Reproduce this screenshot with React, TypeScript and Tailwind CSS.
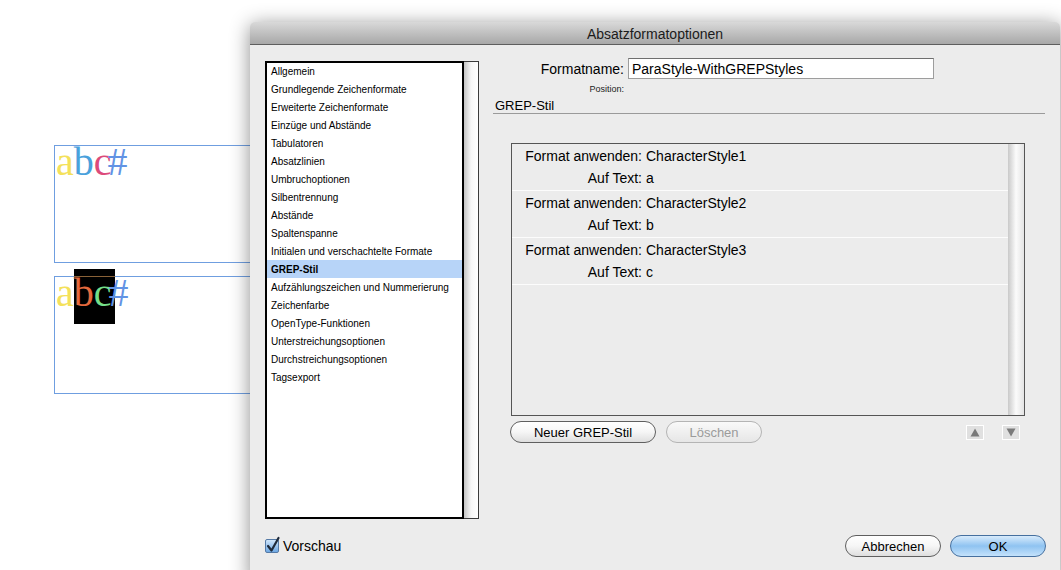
import React from "react";

const sections = [
  "Allgemein",
  "Grundlegende Zeichenformate",
  "Erweiterte Zeichenformate",
  "Einzüge und Abstände",
  "Tabulatoren",
  "Absatzlinien",
  "Umbruchoptionen",
  "Silbentrennung",
  "Abstände",
  "Spaltenspanne",
  "Initialen und verschachtelte Formate",
  "GREP-Stil",
  "Aufzählungszeichen und Nummerierung",
  "Zeichenfarbe",
  "OpenType-Funktionen",
  "Unterstreichungsoptionen",
  "Durchstreichungsoptionen",
  "Tagsexport",
];

const grepRows = [
  { style: "CharacterStyle1", text: "a" },
  { style: "CharacterStyle2", text: "b" },
  { style: "CharacterStyle3", text: "c" },
];

function Triangle({ up }: { up: boolean }) {
  return (
    <svg width="10" height="9" viewBox="0 0 10 9">
      {up ? (
        <polygon points="5,0.5 9.5,8.5 0.5,8.5" fill="#7a7a7a" />
      ) : (
        <polygon points="0.5,0.5 9.5,0.5 5,8.5" fill="#7a7a7a" />
      )}
    </svg>
  );
}

export default function App() {
  return (
    <div className="relative w-[1061px] h-[570px] overflow-hidden bg-white font-['Liberation_Sans',Arial,sans-serif] text-black">
      {/* Canvas text frame 1 */}
      <div className="absolute left-[54px] top-[145px] w-[260px] h-[118px] border border-[#6f9ee0]">
        <div className="-mt-[4px] pl-[1px] font-['Liberation_Serif','Times_New_Roman',serif] text-[40px] leading-[40px] whitespace-nowrap">
          <span className="text-[#f4e15a]">a</span>
          <span className="text-[#49a1dc]">b</span>
          <span className="text-[#dc4b7b] tracking-[-4px]">c</span>
          <span className="text-[#6293e4]">#</span>
        </div>
      </div>

      {/* Canvas text frame 2 */}
      <div className="absolute left-[54px] top-[276px] w-[260px] h-[118px] border border-[#6f9ee0]">
        <div className="absolute left-[19px] -top-[8px] w-[41px] h-[55px] bg-black" />
        <div className="absolute left-[19px] -top-[1px] w-[41px] h-px bg-[#8a6238]" />
        <div className="relative -mt-[4px] pl-[1px] font-['Liberation_Serif','Times_New_Roman',serif] text-[40px] leading-[40px] whitespace-nowrap">
          <span className="text-[#f4e15a]">a</span>
          <span className="text-[#e4693d]">b</span>
          <span className="text-[#74de89] tracking-[-3px]">c</span>
          <span className="text-[#6293e4]">#</span>
        </div>
      </div>

      {/* Dialog window */}
      <div className="absolute left-[250px] top-[22px] w-[810px] h-[560px] flex flex-col rounded-t-[5px] bg-[#ececec] shadow-[0_3px_20px_rgba(0,0,0,0.45)]">
        {/* Title bar */}
        <div className="h-[23px] shrink-0 rounded-t-[5px] border-b border-[#5e5e5e] bg-gradient-to-b from-[#d9d9d9] to-[#a8a8a8] flex items-center justify-center pt-px text-[14px] text-[#1b1b1b] leading-none">
          Absatzformatoptionen
        </div>

        {/* Body */}
        <div className="flex flex-col">
          <div className="flex">
            {/* Section list */}
            <div className="ml-[15px] mt-[16px] w-[214px] h-[458px] flex shrink-0">
              <div className="w-[199px] h-full border-2 border-black bg-white overflow-hidden">
                <div className="-mt-px">
                  {sections.map((s) => (
                    <div
                      key={s}
                      className={
                        "h-[18px] flex items-center pl-[4px] text-[10px] whitespace-nowrap " +
                        (s === "GREP-Stil" ? "bg-[#b7d4f8] font-bold" : "")
                      }
                    >
                      {s}
                    </div>
                  ))}
                </div>
              </div>
              <div className="flex-1 h-full border-y border-r border-[#3a3a3a] bg-gradient-to-r from-[#c4c4c4] via-[#f6f6f6] to-[#ffffff]" />
            </div>

            {/* Right panel */}
            <div className="ml-[14px] w-[552px] flex flex-col">
              <div className="mt-[13px] flex items-center h-[21px]">
                <div className="w-[131px] text-right text-[14px] leading-none">Formatname:</div>
                <div className="ml-[4px] w-[306px] h-[21px] bg-white border border-[#9d9d9d] border-t-[#6f6f6f] flex items-center pl-[3px] text-[14px] leading-none">
                  ParaStyle-WithGREPStyles
                </div>
              </div>
              <div className="mt-[4px] h-[12px] flex items-center">
                <div className="w-[131px] text-right text-[9px] leading-none text-[#222]">Position:</div>
              </div>
              <div className="pt-[3px] pl-[2px] leading-[15px] text-[13px] border-b border-[#9a9a9a]">GREP-Stil</div>

              {/* GREP style list */}
              <div className="mt-[29px] ml-[18px] w-[514px] h-[273px] border border-[#555] flex">
                <div className="flex-1 bg-[#ececec]">
                  {grepRows.map((r) => (
                    <div key={r.style} className="py-px border-b border-[#fcfcfc] text-[14px]">
                      <div className="h-[22px] flex items-center">
                        <span className="w-[130px] text-right">Format anwenden:</span>
                        <span className="ml-[4px]">{r.style}</span>
                      </div>
                      <div className="h-[22px] flex items-center">
                        <span className="w-[130px] text-right">Auf Text:</span>
                        <span className="ml-[4px]">{r.text}</span>
                      </div>
                    </div>
                  ))}
                </div>
                <div className="w-[16px] h-full bg-gradient-to-r from-[#c9c9c9] via-[#fbfbfb] to-[#e4e4e4]" />
              </div>

              {/* Buttons under list */}
              <div className="mt-[5px] ml-[17px] h-[22px] flex items-center">
                <div className="w-[146px] h-[22px] rounded-full border border-[#5f5f5f] bg-gradient-to-b from-[#ffffff] via-[#f6f6f6] to-[#dedede] flex items-center justify-center text-[13px] leading-none">
                  Neuer GREP-Stil
                </div>
                <div className="ml-[10px] w-[96px] h-[22px] rounded-full border border-[#b4b4b4] bg-gradient-to-b from-[#f9f9f9] to-[#e6e6e6] flex items-center justify-center text-[13px] leading-none text-[#9b9b9b]">
                  Löschen
                </div>
                <div className="ml-auto mr-[25px] flex items-center gap-[18px]">
                  <div className="w-[18px] h-[15px] border border-white bg-[#e0e0e0] flex items-center justify-center">
                    <Triangle up={true} />
                  </div>
                  <div className="w-[18px] h-[15px] border border-white bg-[#e0e0e0] flex items-center justify-center">
                    <Triangle up={false} />
                  </div>
                </div>
              </div>
            </div>
          </div>

          {/* Bottom row */}
          <div className="mt-[16px] h-[22px] flex items-center pl-[15px] pr-[14px]">
            <div className="relative w-[14px] h-[14px] rounded-[2px] border border-[#557aa6] bg-gradient-to-b from-[#cfe5fa] to-[#6ea8e3]">
              <svg className="absolute -left-[1px] -top-[4px]" width="16" height="18" viewBox="0 0 16 18">
                <path d="M3 10 L6.5 14.5 L13.5 2" fill="none" stroke="#1f2b3b" strokeWidth="2.2" strokeLinejoin="round" strokeLinecap="round" />
              </svg>
            </div>
            <div className="ml-[4px] text-[14px] leading-none">Vorschau</div>
            <div className="ml-auto flex items-center gap-[9px]">
              <div className="w-[96px] h-[22px] rounded-full border border-[#5f5f5f] bg-gradient-to-b from-[#ffffff] via-[#f6f6f6] to-[#dedede] flex items-center justify-center text-[13px] leading-none">
                Abbrechen
              </div>
              <div className="w-[96px] h-[22px] rounded-full border border-[#46709f] bg-gradient-to-b from-[#d8ebfb] via-[#8fc3f1] to-[#c4e2fb] flex items-center justify-center text-[13px] leading-none">
                OK
              </div>
            </div>
          </div>
        </div>
      </div>
    </div>
  );
}
